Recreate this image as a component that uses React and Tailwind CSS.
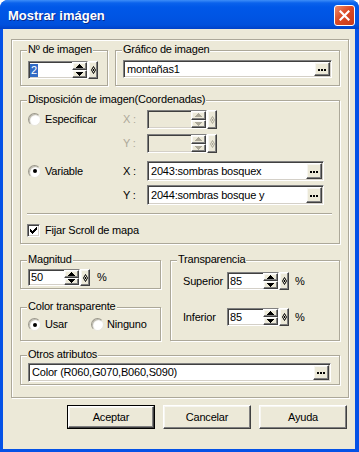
import React from "react";

const SUNKEN =
  "border border-t-[#808080] border-l-[#808080] border-b-white border-r-white shadow-[inset_1px_1px_0_#404040,inset_-1px_-1px_0_#d4d0c8]";
const RAISED =
  "border border-t-white border-l-white border-b-[#404040] border-r-[#404040] shadow-[inset_-1px_-1px_0_#808080,inset_1px_1px_0_#f7f6f1] bg-[#ece9d8]";

const Arrow = ({ up, disabled }) => (
  <svg width="7" height="4" viewBox="0 0 7 4" shapeRendering="crispEdges">
    <polygon
      points={up ? "3.5,0 7,4 0,4" : "0,0 7,0 3.5,4"}
      fill={disabled ? "#aca899" : "#000"}
    />
  </svg>
);

const Diamond = ({ disabled }) => (
  <svg width="5" height="8" viewBox="0 0 5 8">
    <polygon
      points="2.5,0.5 4.5,4 2.5,7.5 0.5,4"
      fill="none"
      stroke={disabled ? "#aca899" : "#000"}
      strokeWidth="1"
    />
    <rect x="2" y="3" width="1" height="2" fill={disabled ? "#aca899" : "#000"} />
  </svg>
);

const Dots = () => (
  <div className={`${RAISED} w-[16px] my-[1px] mr-[1px] flex items-center justify-center gap-px pt-px`}>
    <div className="w-[2px] h-[2px] bg-black" />
    <div className="w-[2px] h-[2px] bg-black" />
    <div className="w-[2px] h-[2px] bg-black" />
  </div>
);

// campo de número con flechas y el botón del rombo
const SpinBox = ({ value, box, disabled, selected }) => (
  <div className="flex">
    <div className={`${SUNKEN} ${box} flex ${disabled ? "bg-[#ece9d8]" : "bg-white"}`}>
      <div className="flex-1 flex items-center pl-[1px]">
        {selected ? (
          <span className="bg-[#316ac5] text-white leading-[13px] px-px">{value}</span>
        ) : (
          <span className="pl-px">{value}</span>
        )}
      </div>
      <div className="w-[15px] flex flex-col">
        <div className={`${RAISED} flex-1 flex items-center justify-center`}>
          <Arrow up disabled={disabled} />
        </div>
        <div className={`${RAISED} flex-1 flex items-center justify-center`}>
          <Arrow disabled={disabled} />
        </div>
      </div>
    </div>
    <div className={`${RAISED} w-[10px] flex items-center justify-center`}>
      <Diamond disabled={disabled} />
    </div>
  </div>
);

const TextBox = ({ value, box }) => (
  <div className={`${SUNKEN} ${box} bg-white flex`}>
    <div className="flex-1 flex items-center pl-[3px] whitespace-nowrap">{value}</div>
    <Dots />
  </div>
);

const Radio = ({ on }) => (
  <div className="w-[13px] h-[13px] rounded-full bg-white border border-t-[#9a978a] border-l-[#9a978a] border-b-[#e8e6dc] border-r-[#e8e6dc] shadow-[inset_1px_1px_1px_#b8b5a8] flex items-center justify-center">
    {on && <div className="w-[4px] h-[4px] rounded-full bg-black" />}
  </div>
);

const Check = () => (
  <div className={`${SUNKEN} w-[13px] h-[13px] bg-white flex items-center justify-center`}>
    <svg width="7" height="7" viewBox="0 0 7 7" shapeRendering="crispEdges">
      <path d="M0 2h1v3h-1z M1 3h1v3h-1z M2 4h1v3h-1z M3 3h1v3h-1z M4 2h1v3h-1z M5 1h1v3h-1z M6 0h1v3h-1z" fill="#000" />
    </svg>
  </div>
);

const Group = ({ title, className, children }) => (
  <div className={`relative border border-[#aca899] shadow-[inset_1px_1px_0_#fff,1px_1px_0_#fff] ${className}`}>
    <span className="absolute left-[6px] -top-[8px] bg-[#ece9d8] px-px leading-[13px] whitespace-nowrap">
      {title}
    </span>
    {children}
  </div>
);

const Button = ({ label, def }) => (
  <div className={`w-[88px] h-[24px] flex ${def ? "border border-black" : ""}`}>
    <div className={`${RAISED} flex-1 flex items-center justify-center`}>{label}</div>
  </div>
);

const App = () => {
  return (
    <div className="w-[359px] h-[452px] bg-white font-['Liberation_Sans',Arial,sans-serif] text-[11px] tracking-[-0.2px] text-black">
      <div className="w-full h-full rounded-t-[8px] bg-[#0552e6] flex flex-col overflow-hidden">
        <div className="h-[29px] shrink-0 flex items-start justify-between pl-[8px] pr-[4px] bg-[linear-gradient(to_bottom,#3d8ef8_0px,#0a62ec_3px,#0058e8_7px,#0054e3_18px,#0050dc_25px,#0041c8_29px)]">
          <span className="mt-[8px] text-white font-bold text-[13px] tracking-normal leading-[16px] [text-shadow:1px_1px_0_#0b2a8c]">
            Mostrar imágen
          </span>
          <div className="mt-[5px] w-[21px] h-[21px] rounded-[3px] border border-white bg-[linear-gradient(135deg,#ee8d6c,#dc4a25_45%,#c63a1b)] flex items-center justify-center">
            <svg width="11" height="11" viewBox="0 0 11 11">
              <path d="M1.5 1.5 L9.5 9.5 M9.5 1.5 L1.5 9.5" stroke="white" strokeWidth="2.2" strokeLinecap="square" />
            </svg>
          </div>
        </div>

        <div className="flex-1 ml-[3px] mr-[4px] mb-[3px] bg-[#ece9d8] flex flex-col">
          <div className="ml-[8px] mt-[10px] w-[338px] h-[359px] border border-[#aca899] shadow-[inset_1px_1px_0_#fff,1px_1px_0_#fff] pl-[8px] pt-[10px]">
            <div className="w-[320px] flex flex-col">
              <div className="flex">
                <Group title="Nº de imagen" className="w-[88px] h-[36px] pl-[7px] pt-[10px]">
                  <SpinBox value="2" box="w-[60px] h-[18px]" selected />
                </Group>
                <Group title="Gráfico de imagen" className="ml-[7px] w-[225px] h-[36px] pl-[7px] pt-[9px]">
                  <TextBox value="montañas1" box="w-[209px] h-[18px]" />
                </Group>
              </div>

              <Group title="Disposición de imagen(Coordenadas)" className="mt-[14px] h-[144px] pl-[7px] pt-[9px]">
                <div className="flex">
                  <div className="w-[95px] h-[19px] flex items-center gap-[4px]">
                    <Radio />
                    <span>Especificar</span>
                  </div>
                  <div className="flex flex-col gap-[5px]">
                    <div className="flex items-center h-[19px]">
                      <span className="w-[24px] text-[#aca899]">X :</span>
                      <SpinBox value="" box="w-[60px] h-[19px]" disabled />
                    </div>
                    <div className="flex items-center h-[19px]">
                      <span className="w-[24px] text-[#aca899]">Y :</span>
                      <SpinBox value="" box="w-[60px] h-[19px]" disabled />
                    </div>
                  </div>
                </div>
                <div className="flex mt-[8px]">
                  <div className="w-[95px] h-[20px] flex items-center gap-[4px]">
                    <Radio on />
                    <span>Variable</span>
                  </div>
                  <div className="flex flex-col gap-[4px]">
                    <div className="flex items-center h-[20px]">
                      <span className="w-[24px]">X :</span>
                      <TextBox value="2043:sombras bosquex" box="w-[177px] h-[20px]" />
                    </div>
                    <div className="flex items-center h-[20px]">
                      <span className="w-[24px]">Y :</span>
                      <TextBox value="2044:sombras bosque y" box="w-[177px] h-[20px]" />
                    </div>
                  </div>
                </div>
                <div className="mt-[8px] -ml-[1px] w-[305px] h-[2px] border-t border-t-[#aca899] border-b border-b-white" />
                <div className="mt-[9px] -ml-[1px] flex items-center gap-[5px] h-[13px]">
                  <Check />
                  <span>Fijar Scroll de mapa</span>
                </div>
              </Group>

              <div className="flex mt-[16px]">
                <div className="w-[141px] flex flex-col">
                  <Group title="Magnitud" className="h-[29px] pl-[7px] pt-[8px]">
                    <div className="flex items-center">
                      <SpinBox value="50" box="w-[52px] h-[17px]" />
                      <span className="ml-[7px]">%</span>
                    </div>
                  </Group>
                  <Group title="Color transparente" className="mt-[18px] h-[34px] pl-[7px] pt-[10px]">
                    <div className="flex items-center h-[13px]">
                      <div className="w-[63px] flex items-center gap-[4px]">
                        <Radio on />
                        <span>Usar</span>
                      </div>
                      <div className="flex items-center gap-[3px]">
                        <Radio />
                        <span>Ninguno</span>
                      </div>
                    </div>
                  </Group>
                </div>
                <Group title="Transparencia" className="ml-[9px] w-[170px] h-[81px] pl-[12px] pt-[11px]">
                  <div className="flex items-center">
                    <span className="w-[44px]">Superior</span>
                    <SpinBox value="85" box="w-[52px] h-[18px]" />
                    <span className="ml-[6px]">%</span>
                  </div>
                  <div className="flex items-center mt-[18px]">
                    <span className="w-[44px]">Inferior</span>
                    <SpinBox value="85" box="w-[52px] h-[18px]" />
                    <span className="ml-[6px]">%</span>
                  </div>
                </Group>
              </div>

              <Group title="Otros atributos" className="mt-[14px] h-[30px] pl-[7px] pt-[7px]">
                <TextBox value="Color (R060,G070,B060,S090)" box="w-[303px] h-[19px]" />
              </Group>
            </div>
          </div>

          <div className="mt-[7px] flex justify-end gap-[8px] pr-[8px]">
            <Button label="Aceptar" def />
            <Button label="Cancelar" />
            <Button label="Ayuda" />
          </div>
        </div>
      </div>
    </div>
  );
};

export default App;
